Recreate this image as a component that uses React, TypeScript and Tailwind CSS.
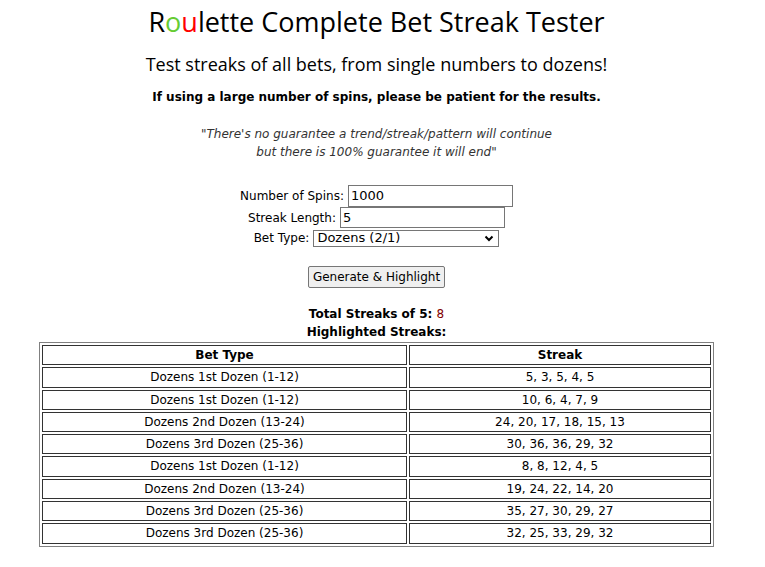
import React from "react";

const rows: [string, string][] = [
  ["Dozens 1st Dozen (1-12)", "5, 3, 5, 4, 5"],
  ["Dozens 1st Dozen (1-12)", "10, 6, 4, 7, 9"],
  ["Dozens 2nd Dozen (13-24)", "24, 20, 17, 18, 15, 13"],
  ["Dozens 3rd Dozen (25-36)", "30, 36, 36, 29, 32"],
  ["Dozens 1st Dozen (1-12)", "8, 8, 12, 4, 5"],
  ["Dozens 2nd Dozen (13-24)", "19, 24, 22, 14, 20"],
  ["Dozens 3rd Dozen (25-36)", "35, 27, 30, 29, 27"],
  ["Dozens 3rd Dozen (25-36)", "32, 25, 33, 29, 32"],
];

export default function App() {
  return (
    <div className="w-[765px] h-[567px] bg-white overflow-hidden">
      <div className="ml-[8px] w-[737px] flex flex-col items-center text-black font-['DejaVu_Sans',sans-serif] text-[12px]">
        <h1 className="mt-[5px] font-['Open_Sans',sans-serif] text-[27px] leading-[34px] font-normal">
          R<span className="text-[#66cc33]">o</span><span className="text-[#ff0000]">u</span>lette Complete Bet Streak Tester
        </h1>
        <h2 className="mt-[12px] font-['Open_Sans',sans-serif] text-[18px] leading-[26px] font-normal">
          Test streaks of all bets, from single numbers to dozens!
        </h2>
        <p className="mt-[12px] font-bold text-[12px] leading-[16px]">
          If using a large number of spins, please be patient for the results.
        </p>
        <p className="mt-[20px] italic text-[#333333] text-center leading-[18px]">
          "There's no guarantee a trend/streak/pattern will continue
          <br />
          but there is 100% guarantee it will end"
        </p>
        <div className="mt-[24px] flex flex-col items-center">
          <div className="flex items-center h-[22px]">
            <span className="mr-[4px]">Number of Spins:</span>
            <div className="w-[165px] h-[22px] border border-[#767676] px-[2px] flex items-center text-[13px]">1000</div>
          </div>
          <div className="flex items-center h-[21px]">
            <span className="mr-[4px]">Streak Length:</span>
            <div className="w-[165px] h-[21px] border border-[#767676] px-[2px] flex items-center text-[13px]">5</div>
          </div>
          <div className="flex items-center h-[18px] mt-[1px]">
            <span className="mr-[4px]">Bet Type:</span>
            <div className="w-[186px] h-[17px] border border-[#767676] pl-[3px] pr-[4px] flex items-center justify-between text-[13px]">
              <span>Dozens (2/1)</span>
              <svg width="10" height="7" viewBox="0 0 10 7">
                <path d="M1.5 1.5 L5 5 L8.5 1.5" stroke="#000" strokeWidth="2" fill="none" />
              </svg>
            </div>
          </div>
        </div>
        <div className="mt-[19px] h-[22px] px-[4px] bg-[#efefef] border border-[#767676] rounded-[2px] flex items-center text-[12px]">
          Generate &amp; Highlight
        </div>
        <div className="mt-[17px] font-bold leading-[18px] text-center">
          Total Streaks of 5: <span className="font-normal text-[#800000]">8</span>
          <br />
          Highlighted Streaks:
        </div>
        <table className="mt-[1px] w-[675px] border border-[#808080] border-separate border-spacing-[2px]">
          <thead>
            <tr>
              <th className="w-[365px] border border-[#333333] py-[2px] leading-[14.3px] font-bold">Bet Type</th>
              <th className="border border-[#333333] py-[2px] leading-[14.3px] font-bold">Streak</th>
            </tr>
          </thead>
          <tbody>
            {rows.map((r, i) => (
              <tr key={i}>
                <td className="border border-[#333333] py-[2px] leading-[14.3px] text-center">{r[0]}</td>
                <td className="border border-[#333333] py-[2px] leading-[14.3px] text-center">{r[1]}</td>
              </tr>
            ))}
          </tbody>
        </table>
      </div>
    </div>
  );
}
